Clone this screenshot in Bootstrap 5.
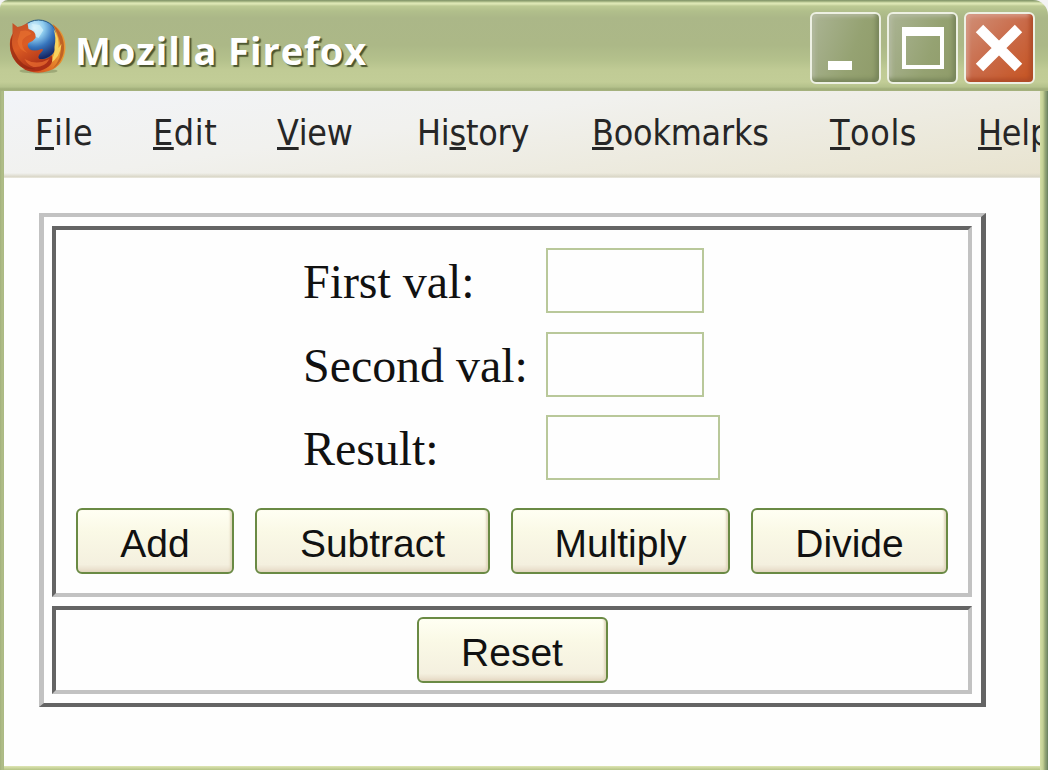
<!DOCTYPE html>
<html lang="en">
<head>
<meta charset="utf-8">
<title>Mozilla Firefox</title>
<link href="https://cdn.jsdelivr.net/npm/bootstrap@5.3.0/dist/css/bootstrap.min.css" rel="stylesheet">
<style>
body { background: #f3f3f3; }
.window { width: 1048px; height: 770px; border-radius: 8px 15px 0 0; padding: 0 8px 4px 4px;
  background:
    linear-gradient(#dfe6b4, #b5c485) 4px bottom / 1036px 4px no-repeat,
    linear-gradient(90deg, #d5dfa6 0, #c3cf94 3px, #98a878 5px, #7c916a 7px, #647c5c 8px) right bottom / 8px 679px no-repeat,
    linear-gradient(90deg, #a3b07c, #b0be88 2px, #abb984) left bottom / 4px 679px no-repeat,
    linear-gradient(#7f9269 0, #94a674 1px, #dce6b4 3px, #dce6b4 4px, #bdca94 6px, #b1bf8b 11px, #abb788 18px, #acb887 45px, #b4c18c 60px, #c0cb95 70px, #c2cd97 82px, #b4c18b 87px, #a1ae7a 89px, #a6b27e 91px); }
.title-bar { height: 91px; padding: 0 5px 0 5px; }
.title-text { font: 700 38px/1 "Open Sans", sans-serif; color: #fff; letter-spacing: .95px; margin: 8px 0 0 8px; text-shadow: 2px 2px 1px #4c5630; }
.win-btn { width: 71px; height: 72px; border: 2px solid #edf0e3; border-radius: 6px; margin-top: 5px;
  background: linear-gradient(110deg, #abb494, #95a272 60%, #8f9b69);
  box-shadow: inset -3px -3px 4px #77855a, inset 2px 2px 4px #b8bda5; }
.win-close { background: linear-gradient(135deg, #d09078, #c96a48 50%, #c65320);
  box-shadow: inset -3px -3px 4px #ad4a27, inset 2px 2px 4px #d9a08f; }
.menu-row { height: 87px; padding: 20px 0 0 31px; display: grid; grid-template-columns: 118px 124px 140px 175px 238px 148px 100px; overflow: hidden;
  font: 35.5px/44px "DejaVu Sans Condensed", "DejaVu Sans", sans-serif; font-stretch: condensed; font-kerning: none; color: #262626; letter-spacing: -.2px;
  background: linear-gradient(transparent 82px, #d9d6c6 86px, #f2f1eb 87px), linear-gradient(172deg, #f2f4f8 0, #f1f1ee 40%, #ebe8d9 80%, #e8e3cf 100%); }
.menu-row u { text-decoration-thickness: 3px; text-underline-offset: 2px; text-decoration-skip-ink: none; }
.menu-row .wide { letter-spacing: .6px; }
.viewport-area { height: 588px; background: #fefefe; padding: 35px 0 0 35px; }
.frame-out { width: 947px; height: 494px; border: 4px solid; border-color: #c2c2c2 #646464 #646464 #c2c2c2; border-right-width: 5px; border-left-width: 5px; padding: 9px 8px; }
.frame-in { width: 920px; border: 4px solid; border-color: #646464 #c2c2c2 #c2c2c2 #646464; }
.calc-pane { height: 371px; padding: 18px 0 0 20px; }
.reset-pane { height: 88px; padding-top: 7px; }
.fields { margin-left: 227px; display: grid; grid-template-columns: 243px 200px; row-gap: 17.5px; }
.fields label { font: 48px/66px "Liberation Serif", serif; color: #111; white-space: nowrap; padding-top: 1px; height: 66px; letter-spacing: -.05px; }
.val-box { width: 158px; height: 65px; border: 2px solid #b9c89a; border-radius: 0; padding: 0 6px; background: #fefefe; }
.val-box.result { width: 174px; }
.op-btn { height: 66px; border: 2px solid #6a8a44; border-radius: 6px; padding: 5px 0 0; color: #111; font: 39px/54px "Liberation Sans", sans-serif;
  background: linear-gradient(#fffff3 0, #faf9e6 35%, #f4f0df 88%, #e5d9c5 100%); box-shadow: inset -2px -1px 2px #e2d8bf; }
.ops { margin-top: 27px; }
</style>
</head>
<body>
<div class="window">
  <header class="title-bar d-flex align-items-center">
    <svg width="58" height="58" viewBox="3.500 0 58 58" class="flex-shrink-0">
      <defs>
        <radialGradient id="globe" cx=".4" cy=".2" r=".8"><stop offset="0" stop-color="#e4f7fd"/><stop offset=".3" stop-color="#8fcdef"/><stop offset=".6" stop-color="#3775bd"/><stop offset="1" stop-color="#15225f"/></radialGradient>
        <linearGradient id="fur" x1="0" y1="0" x2=".5" y2="1"><stop offset="0" stop-color="#c0522a"/><stop offset=".5" stop-color="#dc5c24"/><stop offset="1" stop-color="#ab2f16"/></linearGradient>
        <linearGradient id="tail" x1="1" y1="0" x2=".3" y2="1"><stop offset="0" stop-color="#e0923a"/><stop offset=".5" stop-color="#eb9a31"/><stop offset="1" stop-color="#d84d1c"/></linearGradient>
      </defs>
      <ellipse cx="33" cy="54" rx="19" ry="2.500" fill="#69764b" opacity=".4"/>
      <circle cx="33" cy="23" r="20" fill="url(#globe)" stroke="#235883" stroke-width="1"/>
      <path d="M26 7l8 1 4 5-5 8-4-2 1-6z" fill="#d6f3fb" opacity=".7"/>
      <path d="M47 7Q60 15 60 31Q59 49 43 54Q27 59 15 49L34 43Q47 43 50 31Q53 18 47 7z" fill="url(#tail)"/>
      <path d="M47 7Q56 14 58 25Q61 42 47 52Q57 41 55 28Q53 17 47 7z" fill="#c06325"/>
      <path d="M48 12Q54 20 53 31L56 27Q55 40 44 47Q50 38 49 30Q51 20 48 12z" fill="#f9d25c"/>
      <path d="M7 6L12 10Q17 9 22 6L23 12Q31 14 30 21Q27 25 23 26Q21 29 24 32Q28 35 36 32Q39 32 36 35Q31 40 34 42Q42 43 46 38Q49 47 41 51Q31 57 20 53Q8 46 5 34Q3 23 7 17z" fill="url(#fur)"/>
      <path d="M8 15Q4 28 10 37Q15 49 30 52Q16 54 9 43Q3 34 5 23z" fill="#922611" opacity=".7"/>
      <path d="M15 14Q24 12 26 17Q20 19 17 23Q15 31 22 36Q13 33 12 24z" fill="#ea7130" opacity=".65"/>
      <path d="M19 42Q31 49 44 42Q39 51 28 50Q22 48 19 42z" fill="#f17532" opacity=".65"/>
    </svg>
    <div class="title-text text-nowrap">Mozilla Firefox</div>
    <div class="ms-auto d-flex" style="gap:6px">
      <button class="win-btn p-0" aria-label="Minimize"><svg class="d-block" width="67" height="68"><path d="M16 47h24v9H16z" fill="#fff"/></svg></button>
      <button class="win-btn p-0" aria-label="Maximize"><svg class="d-block" width="67" height="68"><path d="M13 13h42v42H13zM17 22v29h34V22z" fill="#fff" fill-rule="evenodd"/></svg></button>
      <button class="win-btn win-close p-0" aria-label="Close"><svg class="d-block" width="67" height="68"><path d="M13.500 14.500L52.500 53.500M52.500 14.500L13.500 53.500" stroke="#fff" stroke-width="10.500"/></svg></button>
    </div>
  </header>
  <nav class="menu-row">
    <span class="wide"><u>F</u>ile</span><span class="wide"><u>E</u>dit</span><span><u>V</u>iew</span><span>Hi<u>s</u>tory</span><span><u>B</u>ookmarks</span><span class="wide"><u>T</u>ools</span><span><u>H</u>elp</span>
  </nav>
  <main class="viewport-area">
    <div class="frame-out d-flex flex-column justify-content-between">
      <section class="frame-in calc-pane">
        <div class="fields">
          <label for="a">First val:</label><input id="a" class="val-box form-control">
          <label for="b">Second val:</label><input id="b" class="val-box form-control">
          <label for="r">Result:</label><input id="r" class="val-box result form-control">
        </div>
        <div class="ops d-flex">
          <button class="op-btn btn" style="width:158px">Add</button>
          <button class="op-btn btn" style="width:235px;margin-left:21px">Subtract</button>
          <button class="op-btn btn" style="width:219px;margin-left:21px">Multiply</button>
          <button class="op-btn btn" style="width:197px;margin-left:21px">Divide</button>
        </div>
      </section>
      <section class="frame-in reset-pane d-flex justify-content-center">
        <button class="op-btn btn" style="width:191px">Reset</button>
      </section>
    </div>
  </main>
</div>
<script src="https://cdn.jsdelivr.net/npm/bootstrap@5.3.0/dist/js/bootstrap.bundle.min.js"></script>
</body>
</html>
